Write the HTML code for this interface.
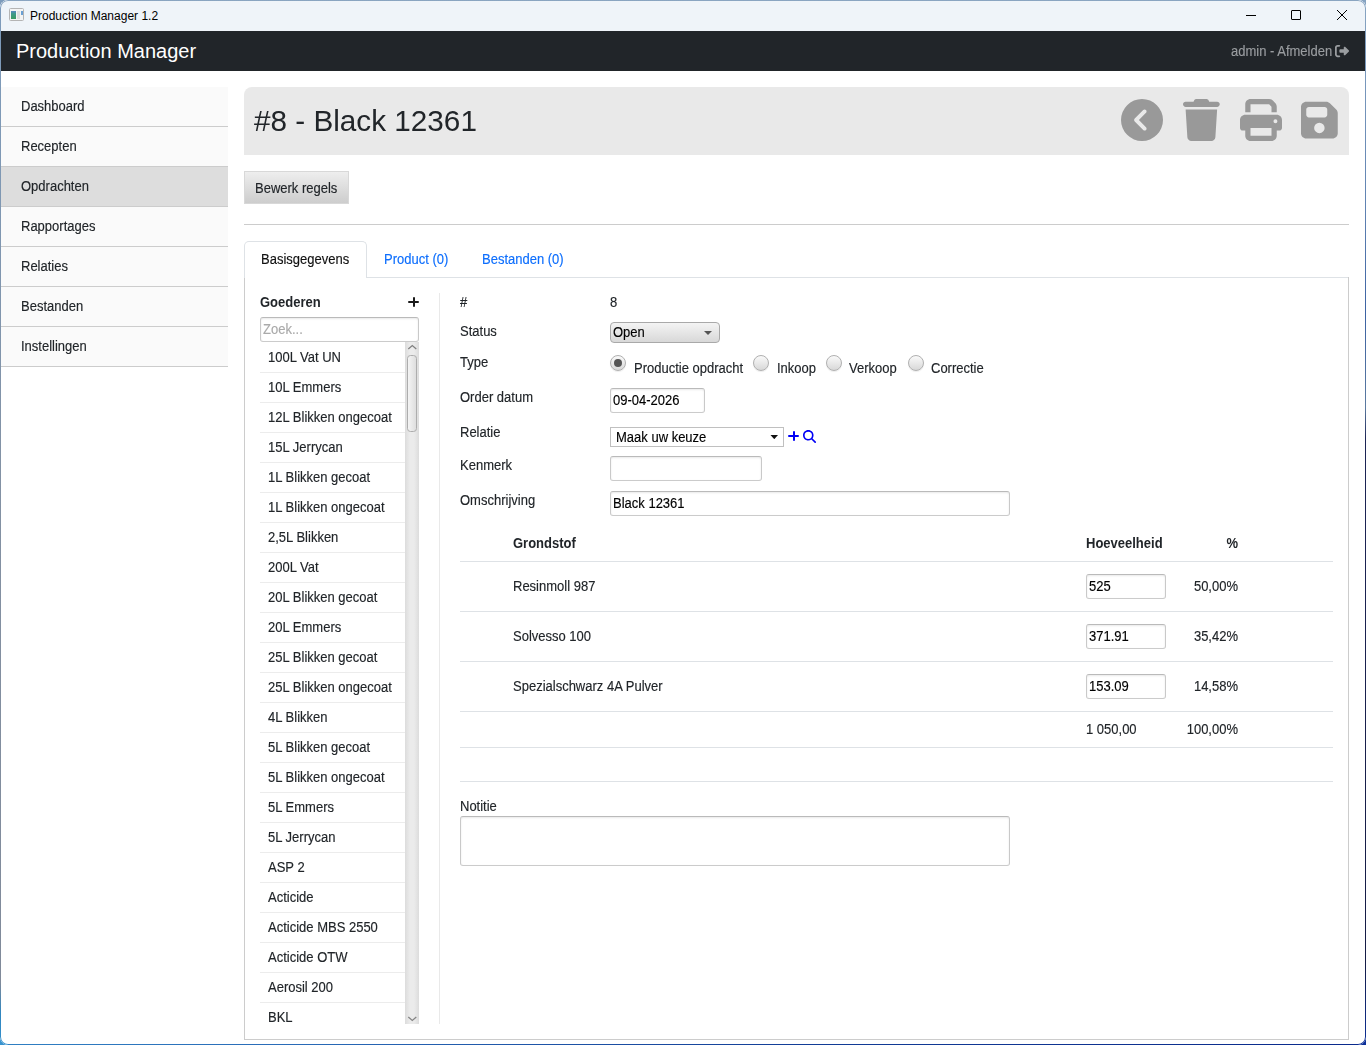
<!DOCTYPE html>
<html>
<head>
<meta charset="utf-8">
<title>Production Manager 1.2</title>
<style>
*{box-sizing:border-box;margin:0;padding:0}
html,body{width:1366px;height:1045px;overflow:hidden}
body{font-family:"Liberation Sans",sans-serif;font-size:14px;color:#212529;-webkit-text-stroke:.15px currentColor;background:linear-gradient(90deg,#3893cf,#2a6cb8 20%,#123c96 60%,#0b2f99) bottom/100% 10px no-repeat,linear-gradient(90deg,#7d9bbb,#86a3c1) top/100% 10px no-repeat,#2a3a6a;position:relative}
.abs{position:absolute}
#win{position:absolute;left:0;top:0;width:1366px;height:1045px;background:#fff;border-radius:8px;overflow:hidden}
.fr{position:absolute;left:0;top:0;width:1366px;height:1045px;border-radius:8px;border:1px solid transparent;pointer-events:none;-webkit-mask:linear-gradient(#fff 0 0) padding-box,linear-gradient(#fff 0 0);-webkit-mask-composite:xor;mask:linear-gradient(#fff 0 0) padding-box exclude,linear-gradient(#fff 0 0)}
#frL{clip-path:inset(0 50% 0 0);background:linear-gradient(180deg,#8aa5c1 0,#7d9bbb 1%,#8391a3 50%,#808a9a 94%,#2f86c0 97%,#3590cc 100%) border-box}
#frR{clip-path:inset(0 0 0 50%);background:linear-gradient(180deg,#8aa5c1 0,#86a3c1 1%,#5f82b2 20%,#3c62a3 30%,#5b7aa0 39%,#1c2455 42%,#151c45 92%,#0b2f99 100%) border-box}
#fb{position:absolute;left:8px;top:1044px;width:1350px;height:1px;background:linear-gradient(90deg,#2f7fc2 0,#2a6cb8 20%,#123c96 60%,#0a2a8c 100%)}
#titlebar{position:absolute;left:0;top:0;width:1366px;height:31px;background:#eff4f9}
#titlebar .t{-webkit-text-stroke:0;position:absolute;left:30px;top:8px;font-size:12px;color:#000;line-height:16px}
#nav{position:absolute;left:0;top:31px;width:1366px;height:40px;background:#212529}
#nav .brand{-webkit-text-stroke:0;position:absolute;left:16px;top:7px;font-size:20px;line-height:26px;color:#fff}
#nav .user{position:absolute;left:1231px;top:12px;font-size:14px;line-height:16px;color:#9a9da0;white-space:nowrap;transform:scaleX(.9286);transform-origin:0 0}
#side{position:absolute;left:0;top:87px;width:228px}
#side div{height:40px;border-bottom:1px solid #ccc;background:#fafafa;padding:11px 0 0 21px;line-height:16px;font-size:14px;color:#212529}
#side div.act{background:#ddd}
#head{position:absolute;left:244px;top:87px;width:1105px;height:68px;background:#e9e9e9;border-radius:8px 8px 0 0}
#head h1{-webkit-text-stroke:0;position:absolute;left:10px;top:16px;font-size:30px;font-weight:normal;line-height:36px;color:#212529;white-space:nowrap;transform:scaleX(.99);transform-origin:0 0}
#btn{position:absolute;left:244px;top:171px;width:105px;height:33px;border:1px solid #d8d8d8;background:linear-gradient(#eeeeee,#cdcdcd);font-size:14px;line-height:32px;padding-left:10px;color:#212529}
.hl{position:absolute;height:1px;background:#dee2e6}
#tabs .tab{position:absolute;top:241px;height:37px;line-height:37px;font-size:14px;color:#0d6efd;white-space:nowrap;transform:scaleX(.9286);transform-origin:0 0}
#tabact{position:absolute;left:244px;top:241px;width:123px;height:37px;border:1px solid #dee2e6;border-bottom:none;border-radius:5px 5px 0 0;background:#fff}
#pane{position:absolute;left:244px;top:277px;width:1105px;height:763px;border:1px solid #ccc;border-top:none}
.lbl{position:absolute;left:460px;line-height:16px;white-space:nowrap;transform:scaleX(.9286);transform-origin:0 0}
.txt{position:absolute;line-height:16px;white-space:nowrap;transform:scaleX(.9286);transform-origin:0 0}
.txt.r{transform-origin:100% 0}
.s{display:inline-block;transform:scaleX(.9286);transform-origin:0 0;white-space:nowrap}
.inp{position:absolute;color:#000;height:25px;border:1px solid;border-color:#bababa #c9c9c9 #cbcbcb;border-radius:3px;background:#fff;box-shadow:inset 0 1px 2px rgba(0,0,0,.09);padding:3px 0 0 2px;line-height:16px;white-space:nowrap}
#list{position:absolute;left:260px;top:343px;width:145px;height:680px;overflow:hidden}
#list .it{height:30px;border-bottom:1px solid #ececec;padding:6.400px 0 0 8px;line-height:16px;white-space:nowrap}
.radio{position:absolute;width:16px;height:16px;border-radius:50%;border:1px solid #b0b0b0;background:linear-gradient(#fafafa,#d8d8d8);box-shadow:0 1px 1px rgba(0,0,0,.08)}
.radio.on::after{content:"";position:absolute;left:3px;top:3px;width:8px;height:8px;border-radius:50%;background:#555}
</style>
</head>
<body>
<div id="win">
  <div id="titlebar">
    <svg class="abs" style="left:9px;top:8px" width="15" height="13" viewBox="0 0 15 13"><defs><linearGradient id="ig" x1="0" y1="0" x2="0" y2="1"><stop offset="0" stop-color="#5a86c0"/><stop offset=".35" stop-color="#3f9a8a"/><stop offset="1" stop-color="#3a9a60"/></linearGradient></defs><rect x=".5" y=".5" width="14" height="12" rx="1" fill="#f4f4f4" stroke="#b4b4b4"/><rect x="2" y="3" width="5" height="8" fill="url(#ig)"/><rect x="8" y="3" width="3" height="8" fill="#dedede"/><rect x="12" y="3" width="2" height="4" fill="#6aa0d4"/></svg>
    <div class="t">Production Manager 1.2</div>
    <svg class="abs" style="left:1245px;top:10px" width="12" height="12" viewBox="0 0 12 12"><path d="M1 5.500H11" stroke="#000" stroke-width="1"/></svg>
    <svg class="abs" style="left:1290px;top:9px" width="12" height="12" viewBox="0 0 12 12"><rect x="1.500" y="1.500" width="9" height="9" rx=".5" fill="none" stroke="#000" stroke-width="1"/></svg>
    <svg class="abs" style="left:1336px;top:9px" width="12" height="12" viewBox="0 0 12 12"><path d="M1 1L11 11M11 1L1 11" stroke="#000" stroke-width="1"/></svg>
  </div>
  <div id="nav">
    <div class="brand">Production Manager</div>
    <div class="user">admin - Afmelden</div>
    <svg class="abs" style="left:1335px;top:13px;" width="14.00" height="14" viewBox="0 0 512 512"><path fill="#9a9da0" d="M377.900 105.900L500.700 228.700c7.200 7.200 11.300 17.100 11.300 27.300s-4.100 20.100-11.300 27.300L377.900 406.100c-6.400 6.400-15 9.900-24 9.900c-18.700 0-33.900-15.200-33.900-33.900l0-62.100-128 0c-17.700 0-32-14.300-32-32l0-64c0-17.700 14.300-32 32-32l128 0 0-62.100c0-18.700 15.200-33.900 33.900-33.900c9 0 17.600 3.600 24 9.900zM160 96L96 96c-17.700 0-32 14.300-32 32l0 256c0 17.700 14.300 32 32 32l64 0c17.700 0 32 14.300 32 32s-14.300 32-32 32l-64 0c-53 0-96-43-96-96L0 128C0 75 43 32 96 32l64 0c17.700 0 32 14.300 32 32s-14.300 32-32 32z"/></svg>
  </div>
  <div id="side">
    <div><span class="s">Dashboard</span></div>
    <div><span class="s">Recepten</span></div>
    <div class="act"><span class="s">Opdrachten</span></div>
    <div><span class="s">Rapportages</span></div>
    <div><span class="s">Relaties</span></div>
    <div><span class="s">Bestanden</span></div>
    <div><span class="s">Instellingen</span></div>
  </div>
  <div id="head"><h1>#8 - Black 12361</h1></div>
  <svg class="abs" style="left:1121px;top:99px;" width="42.00" height="42" viewBox="0 0 512 512"><path fill="#999" d="M512 256A256 256 0 1 0 0 256a256 256 0 1 0 512 0zM271 135c9.400-9.400 24.600-9.400 33.900 0s9.400 24.600 0 33.900l-87 87 87 87c9.400 9.400 9.400 24.600 0 33.900s-24.600 9.400-33.900 0L167 273c-9.400-9.400-9.400-24.600 0-33.900L271 135z"/></svg>
  <svg class="abs" style="left:1183px;top:99px;" width="36.75" height="42" viewBox="0 0 448 512"><path fill="#999" d="M135.200 17.700L128 32H32C14.300 32 0 46.300 0 64S14.300 96 32 96H416c17.700 0 32-14.300 32-32s-14.300-32-32-32H320l-7.200-14.300C307.400 6.800 296.300 0 284.200 0H163.800c-12.100 0-23.200 6.800-28.600 17.700zM416 128H32L53.200 467c1.600 25.300 22.600 45 47.900 45H346.900c25.300 0 46.300-19.700 47.900-45L416 128z"/></svg>
  <svg class="abs" style="left:1240px;top:99px;" width="42.00" height="42" viewBox="0 0 512 512"><path fill="#999" d="M128 0C92.700 0 64 28.700 64 64v96h64V64H354.700L384 93.300V160h64V93.300c0-17-6.700-33.300-18.700-45.300L400 18.700C388 6.700 371.700 0 354.700 0H128zM384 352v32 64H128V384 368 352H384zm64 32h32c17.700 0 32-14.300 32-32V256c0-35.300-28.700-64-64-64H64c-35.300 0-64 28.700-64 64v96c0 17.700 14.300 32 32 32H64v64c0 35.300 28.700 64 64 64H384c35.300 0 64-28.700 64-64V384zM432 248a24 24 0 1 1 0 48 24 24 0 1 1 0-48z"/></svg>
  <svg class="abs" style="left:1301px;top:99px;" width="36.75" height="42" viewBox="0 0 448 512"><path fill="#999" d="M64 32C28.700 32 0 60.700 0 96V416c0 35.300 28.700 64 64 64H384c35.300 0 64-28.700 64-64V173.300c0-17-6.700-33.300-18.700-45.300L352 50.700C340 38.700 323.700 32 306.700 32H64zm0 96c0-17.700 14.300-32 32-32H288c17.700 0 32 14.300 32 32v64c0 17.700-14.300 32-32 32H96c-17.700 0-32-14.300-32-32V128zM224 288a64 64 0 1 1 0 128 64 64 0 1 1 0-128z"/></svg>
  <div id="btn"><span class="s">Bewerk regels</span></div>
  <div class="hl" style="left:244px;top:224px;width:1105px;background:#ccc"></div>
  <div class="hl" style="left:244px;top:277px;width:1105px"></div>
  <div id="pane"></div>
  <div id="tabact"></div>
  <div id="tabs">
    <div class="tab" style="left:261px;color:#111">Basisgegevens</div>
    <div class="tab" style="left:384px">Product (0)</div>
    <div class="tab" style="left:482px">Bestanden (0)</div>
  </div>

  <!-- left list -->
  <div class="txt" style="left:260px;top:294px;font-weight:bold;-webkit-text-stroke:0">Goederen</div>
  <div class="abs" style="left:408px;top:301px;width:11px;height:2px;border-radius:1px;background:#1a1a1a"></div><div class="abs" style="left:412.600px;top:297px;width:2.300px;height:10px;border-radius:1px;background:#1a1a1a"></div>
  <div class="inp" style="left:260px;top:317px;width:159px;color:#aaa"><span class="s">Zoek...</span></div>
  <div id="list">
      <div class="it"><span class="s">100L Vat UN</span></div>
      <div class="it"><span class="s">10L Emmers</span></div>
      <div class="it"><span class="s">12L Blikken ongecoat</span></div>
      <div class="it"><span class="s">15L Jerrycan</span></div>
      <div class="it"><span class="s">1L Blikken gecoat</span></div>
      <div class="it"><span class="s">1L Blikken ongecoat</span></div>
      <div class="it"><span class="s">2,5L Blikken</span></div>
      <div class="it"><span class="s">200L Vat</span></div>
      <div class="it"><span class="s">20L Blikken gecoat</span></div>
      <div class="it"><span class="s">20L Emmers</span></div>
      <div class="it"><span class="s">25L Blikken gecoat</span></div>
      <div class="it"><span class="s">25L Blikken ongecoat</span></div>
      <div class="it"><span class="s">4L Blikken</span></div>
      <div class="it"><span class="s">5L Blikken gecoat</span></div>
      <div class="it"><span class="s">5L Blikken ongecoat</span></div>
      <div class="it"><span class="s">5L Emmers</span></div>
      <div class="it"><span class="s">5L Jerrycan</span></div>
      <div class="it"><span class="s">ASP 2</span></div>
      <div class="it"><span class="s">Acticide</span></div>
      <div class="it"><span class="s">Acticide MBS 2550</span></div>
      <div class="it"><span class="s">Acticide OTW</span></div>
      <div class="it"><span class="s">Aerosil 200</span></div>
      <div class="it"><span class="s">BKL</span></div>
  </div>
  <div class="abs" style="left:405px;top:342px;width:14px;height:682px;background:linear-gradient(90deg,#dcdcdc,#ebebeb 35%,#ebebeb 65%,#dcdcdc)"></div>
  <div class="abs" style="left:407.300px;top:354.500px;width:9.500px;height:77.500px;border:1px solid #adadad;border-radius:3.500px;background:linear-gradient(90deg,#f4f4f4,#dedede)"></div>
  <svg class="abs" style="left:407px;top:344px" width="10" height="6" viewBox="0 0 10 6"><path d="M1.300 5L5.300 1.500L9.300 5" fill="none" stroke="#808080" stroke-width="1.250"/></svg>
  <svg class="abs" style="left:407px;top:1016px" width="10" height="6" viewBox="0 0 10 6"><path d="M1.300 1L5.300 4.500L9.300 1" fill="none" stroke="#858585" stroke-width="1.300"/></svg>
  <div class="abs" style="left:439px;top:293px;width:1px;height:731px;background:#e9e9e9"></div>

  <!-- form -->
  <div class="lbl" style="top:294px">#</div>
  <div class="txt" style="left:610px;top:294px">8</div>
  <div class="lbl" style="top:323px">Status</div>
  <div class="abs" style="left:610px;top:322px;width:110px;height:21px;border:1px solid #a9a9a9;border-radius:4px;background:linear-gradient(#f4f4f4,#d8d8d8);padding:1px 0 0 2px;line-height:16px;color:#000"><span class="s">Open</span></div>
  <svg class="abs" style="left:704px;top:331px" width="8" height="4" viewBox="0 0 8 4"><path d="M0 0H8L4 4Z" fill="#555"/></svg>
  <div class="lbl" style="top:354px">Type</div>
  <div class="radio on" style="left:610px;top:355px"></div>
  <div class="txt" style="left:634px;top:360px">Productie opdracht</div>
  <div class="radio" style="left:753px;top:355px"></div>
  <div class="txt" style="left:777px;top:360px">Inkoop</div>
  <div class="radio" style="left:826px;top:355px"></div>
  <div class="txt" style="left:849px;top:360px">Verkoop</div>
  <div class="radio" style="left:908px;top:355px"></div>
  <div class="txt" style="left:931px;top:360px">Correctie</div>
  <div class="lbl" style="top:389px">Order datum</div>
  <div class="inp" style="left:610px;top:388px;width:95px"><span class="s">09-04-2026</span></div>
  <div class="lbl" style="top:424px">Relatie</div>
  <div class="abs" style="left:610px;top:427px;width:174px;height:20px;border:1px solid #c0c0c0;background:#fff;padding:.5px 0 0 5px;line-height:16px;color:#000"><span class="s">Maak uw keuze</span></div>
  <svg class="abs" style="left:769.700px;top:435px" width="8.500" height="4.200" viewBox="0 0 9 5"><path d="M0 0H9L4.500 5Z" fill="#111"/></svg>
  <div class="abs" style="left:788px;top:435px;width:11px;height:2px;border-radius:1px;background:#0000f5"></div><div class="abs" style="left:792.600px;top:431px;width:2.300px;height:10px;border-radius:1px;background:#0000f5"></div>
  <svg class="abs" style="left:803px;top:430px;" width="13.00" height="13" viewBox="0 0 512 512"><path fill="#0000f5" d="M416 208c0 45.900-14.900 88.300-40 122.700L502.600 457.400c12.500 12.500 12.500 32.800 0 45.300s-32.800 12.500-45.300 0L330.700 376c-34.400 25.200-76.800 40-122.700 40C93.100 416 0 322.900 0 208S93.100 0 208 0S416 93.100 416 208zM208 352a144 144 0 1 0 0-288 144 144 0 1 0 0 288z"/></svg>
  <div class="lbl" style="top:457px">Kenmerk</div>
  <div class="inp" style="left:610px;top:456px;width:152px"></div>
  <div class="lbl" style="top:492px">Omschrijving</div>
  <div class="inp" style="left:610px;top:491px;width:400px"><span class="s">Black 12361</span></div>

  <!-- table -->
  <div class="txt" style="left:513px;top:535px;font-weight:bold;-webkit-text-stroke:0">Grondstof</div>
  <div class="txt" style="left:1086px;top:535px;font-weight:bold;-webkit-text-stroke:0">Hoeveelheid</div>
  <div class="txt r" style="left:1138px;width:100px;text-align:right;top:535px;font-weight:bold;-webkit-text-stroke:0">%</div>
  <div class="hl" style="left:460px;top:561px;width:873px"></div>
  <div class="txt" style="left:513px;top:578px">Resinmoll 987</div>
  <div class="inp" style="left:1086px;top:574px;width:80px"><span class="s">525</span></div>
  <div class="txt r" style="left:1138px;width:100px;text-align:right;top:578px">50,00%</div>
  <div class="hl" style="left:460px;top:611px;width:873px"></div>
  <div class="txt" style="left:513px;top:628px">Solvesso 100</div>
  <div class="inp" style="left:1086px;top:624px;width:80px"><span class="s">371.91</span></div>
  <div class="txt r" style="left:1138px;width:100px;text-align:right;top:628px">35,42%</div>
  <div class="hl" style="left:460px;top:661px;width:873px"></div>
  <div class="txt" style="left:513px;top:678px">Spezialschwarz 4A Pulver</div>
  <div class="inp" style="left:1086px;top:674px;width:80px"><span class="s">153.09</span></div>
  <div class="txt r" style="left:1138px;width:100px;text-align:right;top:678px">14,58%</div>
  <div class="hl" style="left:460px;top:711px;width:873px"></div>
  <div class="txt" style="left:1086px;top:721px">1 050,00</div>
  <div class="txt r" style="left:1138px;width:100px;text-align:right;top:721px">100,00%</div>
  <div class="hl" style="left:460px;top:747px;width:873px"></div>
  <div class="hl" style="left:460px;top:781px;width:873px"></div>
  <div class="lbl" style="top:798px">Notitie</div>
  <div class="inp" style="left:460px;top:816px;width:550px;height:50px"></div>
</div>
<div class="fr" id="frL"></div><div class="fr" id="frR"></div><div id="fb"></div>
</body>
</html>
